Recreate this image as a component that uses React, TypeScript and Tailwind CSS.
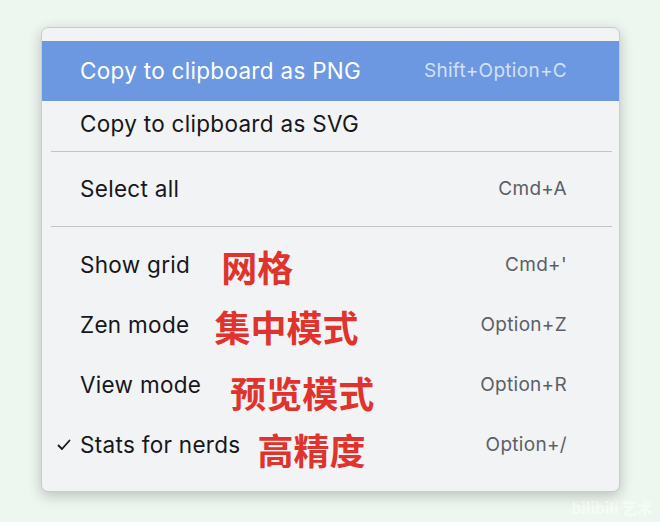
import React from "react";

type Item = {
  label: string;
  shortcut?: string;
  note?: string;
  noteClass?: string;
  checked?: boolean;
};

const CJK = "font-['Noto_Sans_CJK_SC','Noto_Sans',sans-serif]";

function Row({ item, active = false, tall = true }: { item: Item; active?: boolean; tall?: boolean }) {
  return (
    <div
      className={`relative flex items-center pl-[38px] pr-[52px] ${tall ? "h-[60px]" : "h-[46px]"} ${
        active ? "bg-[#6b98e0] text-white" : "text-[#16171a]"
      }`}
    >
      {item.checked && (
        <svg
          className="absolute left-[15px] top-1/2 -translate-y-1/2"
          width="14"
          height="12"
          viewBox="0 0 14 12"
          fill="none"
        >
          <path d="M1.5 6.5 L5 10 L12.5 1.5" stroke="#16171a" strokeWidth="1.8" strokeLinecap="round" strokeLinejoin="round" />
        </svg>
      )}
      <span className="text-[22.5px] tracking-[0.3px]">{item.label}</span>
      {item.note && (
        <span className={`${CJK} text-[36px] font-bold leading-none text-[#e0332d] ${item.noteClass ?? ""}`}>
          {item.note}
        </span>
      )}
      {item.shortcut && (
        <span className={`ml-auto text-[19px] tracking-[0.3px] ${active ? "text-[#d2e0f6]" : "text-[#5c5f66]"}`}>
          {item.shortcut}
        </span>
      )}
    </div>
  );
}

function Separator() {
  return <div className="ml-[9px] mr-[7px] h-px bg-[#c2c4c8]" />;
}

export default function App() {
  return (
    <div className="relative h-[522px] w-[660px] overflow-hidden bg-[#eef7ef] font-['Inter','Liberation_Sans',sans-serif]">
      <div className="pl-[41px] pt-[27px]">
        <div className="w-[579px] h-[465px] rounded-[7px] border border-[#c9cbcf] bg-[#f1f3f5] pt-[13px] shadow-[0_4px_14px_rgba(0,0,0,0.22)]">
          <Row item={{ label: "Copy to clipboard as PNG", shortcut: "Shift+Option+C" }} active />
          <Row item={{ label: "Copy to clipboard as SVG" }} tall={false} />
          <div className="pt-[4px] pb-[7px]">
            <Separator />
          </div>
          <Row item={{ label: "Select all", shortcut: "Cmd+A" }} />
          <div className="pt-[7px] pb-[8px]">
            <Separator />
          </div>
          <Row item={{ label: "Show grid", shortcut: "Cmd+'", note: "网格", noteClass: "ml-[31px] translate-y-[1px]" }} />
          <Row item={{ label: "Zen mode", shortcut: "Option+Z", note: "集中模式", noteClass: "ml-[25px] translate-y-[1px]" }} />
          <Row item={{ label: "View mode", shortcut: "Option+R", note: "预览模式", noteClass: "ml-[29px] translate-y-[7px]" }} />
          <Row
            item={{ label: "Stats for nerds", shortcut: "Option+/", note: "高精度", noteClass: "ml-[17px] translate-y-[4px]", checked: true }}
          />
        </div>
      </div>
      <span className={`${CJK} absolute right-[8px] bottom-[4px] text-[15px] leading-tight font-bold text-white/50`}>
        bilibili 艺术
      </span>
    </div>
  );
}
